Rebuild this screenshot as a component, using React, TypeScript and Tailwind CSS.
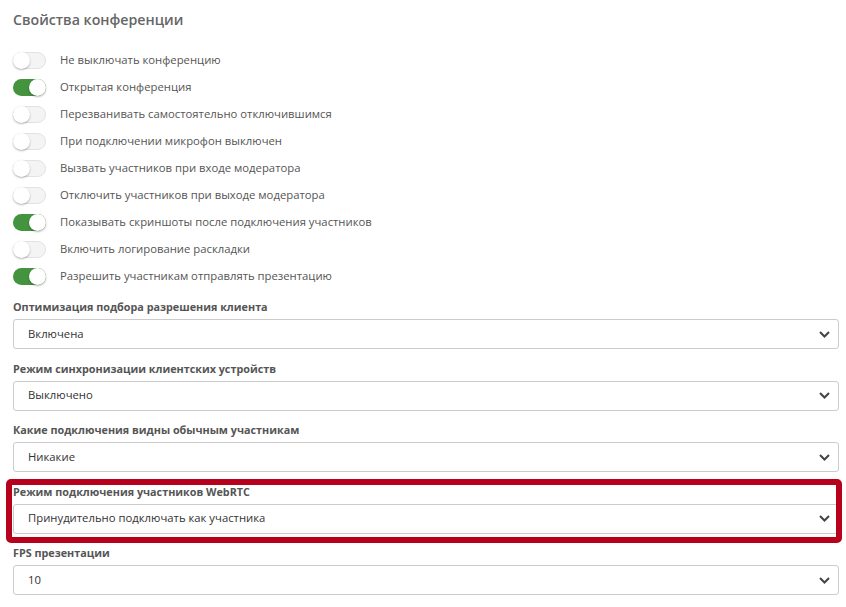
const toggles: { label: string; on: boolean }[] = [
  { label: "Не выключать конференцию", on: false },
  { label: "Открытая конференция", on: true },
  { label: "Перезванивать самостоятельно отключившимся", on: false },
  { label: "При подключении микрофон выключен", on: false },
  { label: "Вызвать участников при входе модератора", on: false },
  { label: "Отключить участников при выходе модератора", on: false },
  { label: "Показывать скриншоты после подключения участников", on: true },
  { label: "Включить логирование раскладки", on: false },
  { label: "Разрешить участникам отправлять презентацию", on: true },
];

function Toggle({ on }: { on: boolean }) {
  return (
    <div
      className={`relative w-[33px] h-[17px] rounded-full shrink-0 ${
        on ? "bg-[#43933f]" : "bg-[#f4f4f4] border border-[#e2e2e2]"
      }`}
    >
      <div
        className={`absolute w-[17px] h-[17px] rounded-full bg-white shadow-[0_1px_2px_rgba(0,0,0,0.3)] ${
          on ? "top-0 right-0" : "-top-px -left-px"
        }`}
      />
    </div>
  );
}

function Chevron() {
  return (
    <svg width="11" height="7" viewBox="0 0 11 7" fill="none">
      <path d="M1 1l4.5 4.5L10 1" stroke="#444" strokeWidth="2" />
    </svg>
  );
}

function SelectField({ label, value }: { label: string; value: string }) {
  return (
    <div className="flex flex-col">
      <div className="text-[10.8px] font-bold text-[#555] leading-[16px] mb-[4px]">{label}</div>
      <div className="h-[30px] border border-[#ccc] rounded-[3px] bg-white flex items-center justify-between pl-[14px] pr-[8px]">
        <span className="text-[11.3px] text-[#333]">{value}</span>
        <Chevron />
      </div>
    </div>
  );
}

export default function App() {
  return (
    <div
      className="w-[846px] h-[607px] bg-white overflow-hidden pl-[13px] pr-[7px] pt-[10px]"
      style={{ fontFamily: '"Open Sans", sans-serif' }}
    >
      <h2 className="text-[14.2px] font-semibold text-[#666] leading-[20px] mb-[22px]">
        Свойства конференции
      </h2>
      <div className="flex flex-col gap-[10px]">
        {toggles.map((t) => (
          <div key={t.label} className="flex items-center h-[17px]">
            <Toggle on={t.on} />
            <span className="ml-[14px] text-[11.3px] text-[#555]">{t.label}</span>
          </div>
        ))}
      </div>
      <div className="flex flex-col gap-[11.5px] mt-[14px]">
        <SelectField label="Оптимизация подбора разрешения клиента" value="Включена" />
        <SelectField label="Режим синхронизации клиентских устройств" value="Выключено" />
        <SelectField label="Какие подключения видны обычным участникам" value="Никакие" />
        <div className="relative">
          <SelectField label="Режим подключения участников WebRTC" value="Принудительно подключать как участника" />
          <div className="absolute -left-[7px] -right-[3px] -top-[5px] -bottom-[9px] border-[6px] border-[#b7001b] rounded-[5px] pointer-events-none" />
        </div>
        <SelectField label="FPS презентации" value="10" />
      </div>
    </div>
  );
}
